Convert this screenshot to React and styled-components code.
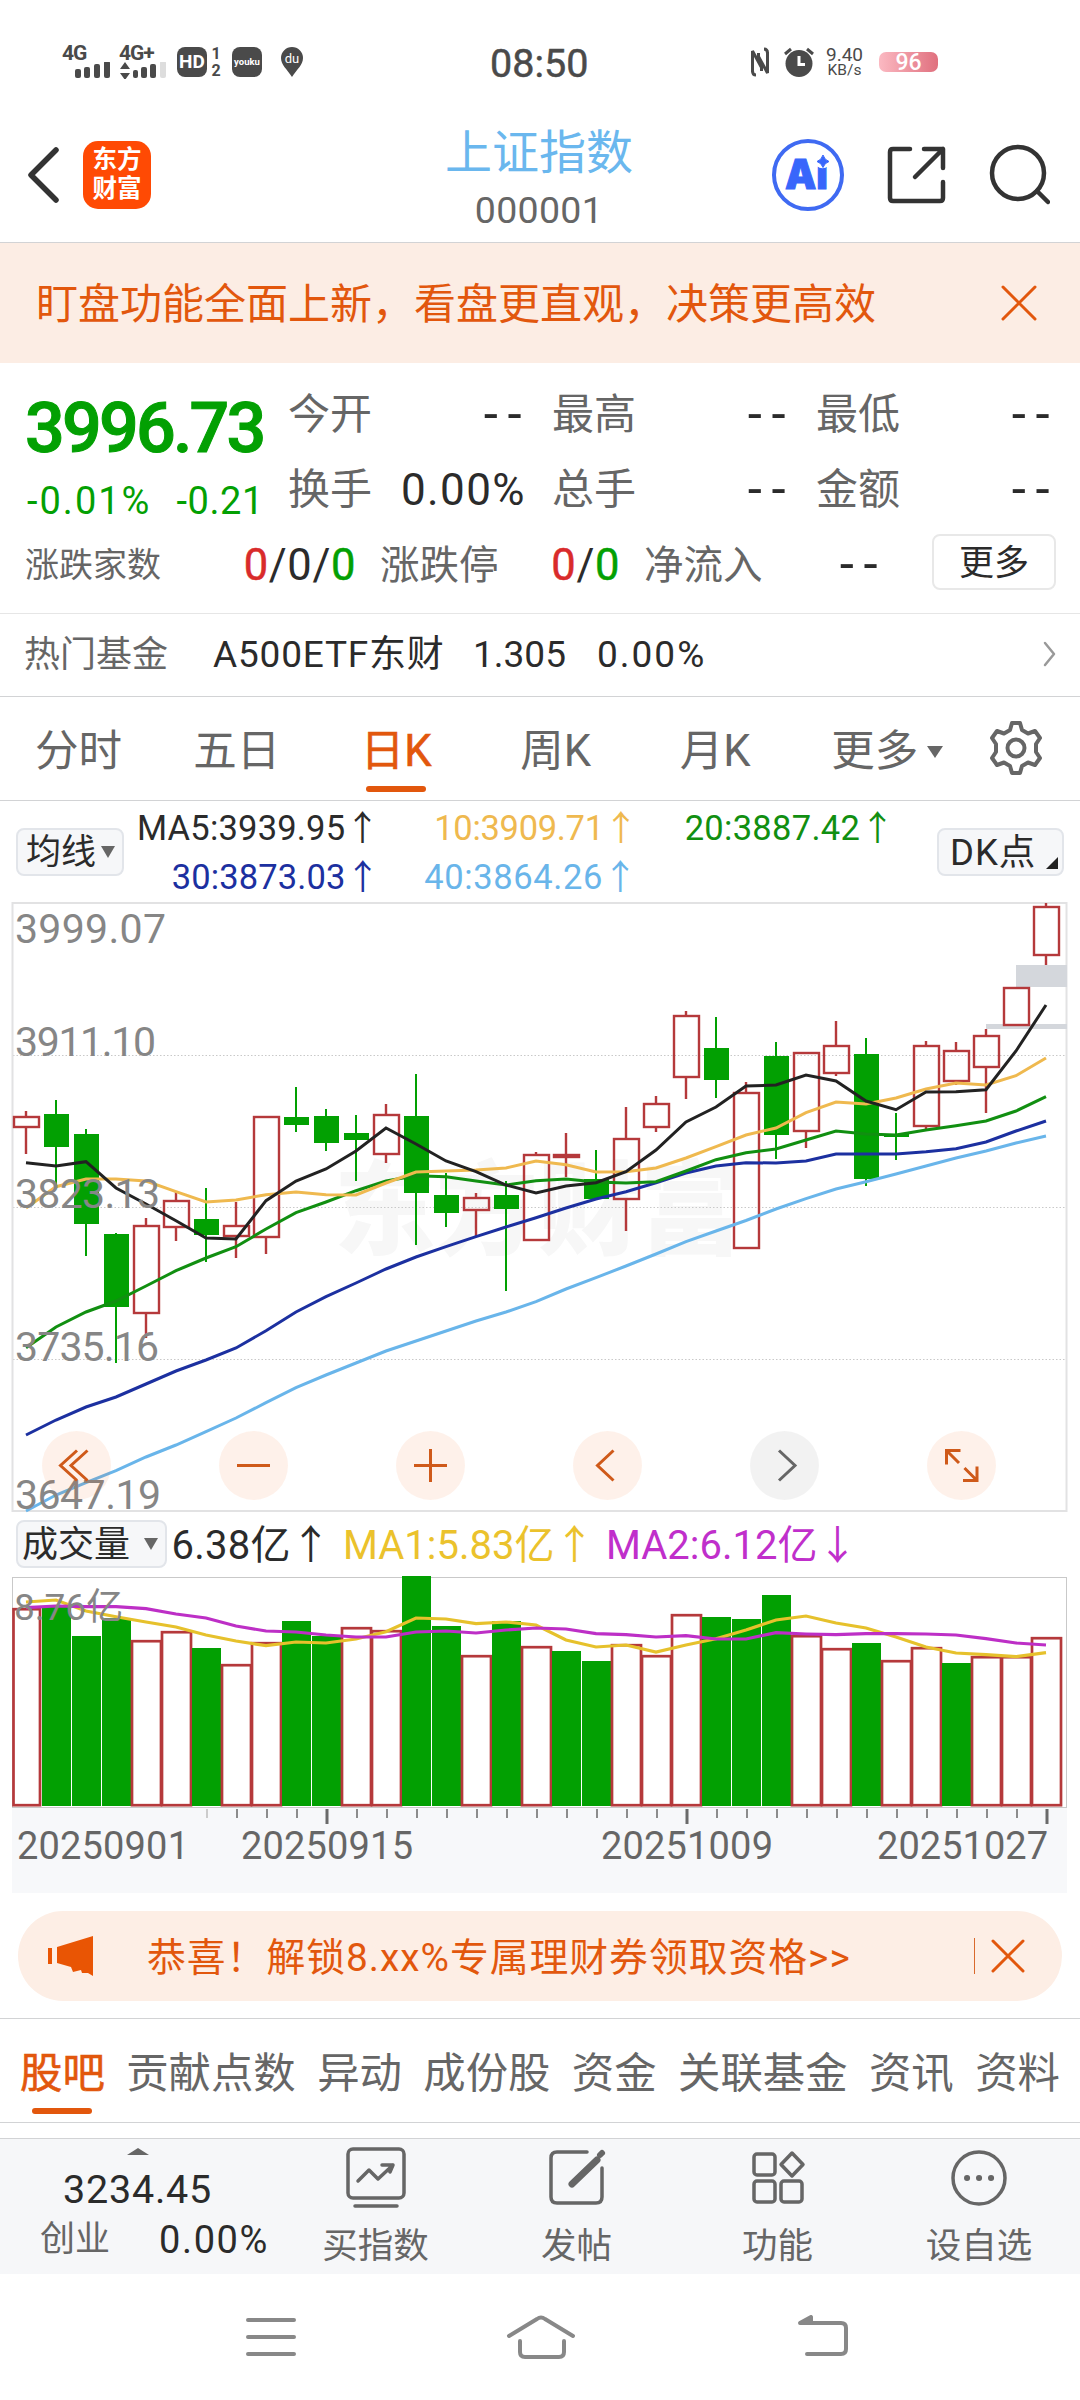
import React from "react";
import styled, { createGlobalStyle, css } from "styled-components";

const c = {
  orange: "#e2570d",
  text: "#2b2b2b",
  grey: "#666666",
  green: "#03a003",
  red: "#d92b2b",
  line: "#d2d3d5",
  panel: "#f6f7f9",
};

const Global = createGlobalStyle`
  * { box-sizing: border-box; }
  body { margin: 0; background: #fff; }
`;

const Screen = styled.div`
  width: 1080px;
  height: 2400px;
  overflow: hidden;
  background: #fff;
  display: flex;
  flex-direction: column;
  font-family: Roboto, "Noto Sans CJK SC", sans-serif;
  color: ${c.text};
  white-space: nowrap;
  & > * { flex: none; }
`;

const T = styled.span`
  font-size: ${(p) => p.$s}px;
  line-height: ${(p) => p.$lh || 1.2};
  color: ${(p) => p.$c || "inherit"};
  font-weight: ${(p) => p.$w || 400};
  letter-spacing: ${(p) => p.$ls || 0}px;
  ${(p) => p.$bold && css`-webkit-text-stroke: ${p.$bold}px currentColor;`}
  ${(p) => !p.$lh && css`padding-top: 0.1em;`}
`;

/* ---------- status bar ---------- */
const StatusBar = styled.div`
  height: 122px;
  padding: 1px 142px 0 62px;
  display: grid;
  grid-template-columns: 428px 1fr auto;
  align-items: center;
  color: #4a4a4a;
`;
const StatusGroup = styled.div`
  display: flex;
  align-items: center;
  height: 34px;
`;
const Signal = styled.div`
  width: ${(p) => p.$w}px;
  height: 34px;
  display: flex;
  flex-direction: column;
  font-size: 21px;
  line-height: 17px;
  font-weight: 700;
  letter-spacing: -1px;
`;
const Badge = styled.div`
  width: 30px;
  height: 30px;
  border-radius: 8px;
  background: #4a4a4a;
  color: #fff;
  font-size: ${(p) => p.$s}px;
  font-weight: 700;
  display: flex;
  align-items: center;
  justify-content: center;
`;
const HdDigits = styled.div`
  width: 14px;
  margin: 0 9px 0 2px;
  display: flex;
  flex-direction: column;
  font-size: 16px;
  line-height: 17px;
  font-weight: 700;
  text-align: center;
`;
const Speed = styled.div`
  margin: 0 15px 0 8px;
  width: 39px;
  display: flex;
  flex-direction: column;
  align-items: center;
  font-size: 19px;
  line-height: 17px;
  small { font-size: 15.5px; line-height: 15px; }
`;
const Battery = styled.div`
  width: 59px;
  height: 20px;
  border-radius: 7px;
  background: linear-gradient(90deg, #fbb9c2, #e0707e);
  color: #fff;
  font-size: 23px;
  line-height: 21px;
  font-weight: 500;
  text-align: center;
`;

/* ---------- header ---------- */
const Header = styled.header`
  height: 121px;
  padding: 0 30px 14px 26px;
  border-bottom: 1px solid ${c.line};
  display: grid;
  grid-template-columns: 317px 1fr 279px;
  grid-template-rows: 106px;
  align-items: center;
`;
const HeaderLeft = styled.div`
  display: flex;
  align-items: center;
  gap: 23px;
`;
const Logo = styled.div`
  width: 68px;
  height: 68px;
  border-radius: 15px;
  background: #ff4a04;
  color: #fff;
  font-size: 24.5px;
  font-weight: 700;
  line-height: 29px;
  padding-top: 4px;
  text-align: center;
`;
const Title = styled.div`
  height: 120px;
  align-self: start;
  margin-right: 36px;
  display: flex;
  flex-direction: column;
  align-items: center;
`;
const HeaderRight = styled.div`
  display: flex;
  align-items: center;
  justify-content: space-between;
`;

/* ---------- banner ---------- */
const Banner = styled.div`
  height: 120px;
  padding: 0 43px 0 36px;
  background: #fcede4;
  display: flex;
  align-items: center;
  justify-content: space-between;
`;

/* ---------- quote ---------- */
const Quote = styled.section`
  height: 251px;
  padding: 13px 23px 0 25px;
  border-bottom: 1px solid #e6e6e6;
`;
const QuoteTop = styled.div`
  display: grid;
  grid-template-columns: 263px 1fr;
  height: 150px;
`;
const PriceCol = styled.div`
  display: flex;
  flex-direction: column;
  color: ${c.green};
`;
const Changes = styled.div`
  display: flex;
  gap: 25px;
  margin: -2px 0 0 2px;
`;
const Cells = styled.div`
  display: grid;
  grid-template-columns: 238px 238px 238px;
  grid-template-rows: 75px 75px;
  column-gap: 26px;
`;
const Cell = styled.div`
  display: flex;
  align-items: center;
  justify-content: space-between;
`;
const Dashes = styled.span`
  font-family: "Noto Sans", sans-serif;
  font-size: 50px;
  line-height: 50px;
  letter-spacing: 7.5px;
  margin: -8px -4px 0 0;
`;
const Breadth = styled.div`
  height: 76px;
  display: flex;
  align-items: center;
`;
const Pair = styled.div`
  width: ${(p) => p.$w}px;
  margin-right: ${(p) => p.$mr || 0}px;
  display: flex;
  align-items: center;
  justify-content: space-between;
`;
const MoreButton = styled.div`
  width: 124px;
  height: 56px;
  margin-top: -4px;
  border: 2px solid #e8e8e8;
  border-radius: 8px;
  display: flex;
  align-items: center;
  justify-content: center;
`;
const Fund = styled.div`
  height: 83px;
  padding: 0 24px 3px 24px;
  border-bottom: 1px solid ${c.line};
  display: flex;
  align-items: center;
`;
const Push = styled.div`
  margin-left: auto;
  display: flex;
`;

/* ---------- period tabs ---------- */
const Periods = styled.nav`
  height: 104px;
  border-bottom: 1px solid ${c.line};
  display: grid;
  grid-template-columns: 157px repeat(5, 159.5px) 1fr;
`;
const Tab = styled.div`
  display: flex;
  flex-direction: column;
  align-items: center;
  padding-top: ${(p) => p.$pt}px;
  font-size: ${(p) => p.$s}px;
  line-height: 54px;
  color: ${(p) => (p.$on ? c.orange : c.grey)};
  -webkit-text-stroke: ${(p) => (p.$on ? 0.6 : 0)}px currentColor;
  &::after {
    content: "";
    width: 60px;
    height: 6px;
    margin: ${(p) => p.$gap}px -20px 0;
    border-radius: 3px;
    background: ${(p) => (p.$on ? c.orange : "transparent")};
  }
`;
const TabRow = styled.span`
  display: flex;
  align-items: center;
  gap: 9px;
  margin-right: -25px;
`;
const Down = styled.i`
  width: 0;
  height: 0;
  border-left: ${(p) => p.$w}px solid transparent;
  border-right: ${(p) => p.$w}px solid transparent;
  border-top: ${(p) => p.$h}px solid ${c.grey};
`;
const Gear = styled.div`
  padding: 23px 2px 0 0;
  text-align: center;
`;

/* ---------- indicator legend ---------- */
const Legend = styled.div`
  height: 100px;
  padding: 1px 16px 0;
  display: flex;
  align-items: center;
`;
const Chip = styled.div`
  width: ${(p) => p.$w}px;
  height: 48px;
  padding: ${(p) => p.$p || "0"};
  border: 2px solid #e2e5ea;
  border-radius: 8px;
  background: ${c.panel};
  display: flex;
  align-items: center;
  justify-content: space-between;
`;
const MaGrid = styled.div`
  width: 771px;
  display: grid;
  grid-template-columns: 256px 258px 257px;
  grid-template-rows: 49px 49px;
  justify-items: end;
  align-items: center;
  margin-right: 42px;
`;
const Corner = styled.i`
  width: 0;
  height: 0;
  align-self: flex-end;
  margin-bottom: 5px;
  border-left: 12px solid transparent;
  border-bottom: 12px solid #222;
`;

/* ---------- charts ---------- */
const ChartArea = styled.div`
  position: relative;
  height: 612px;
`;
const Svg = styled.svg`
  display: block;
  overflow: visible;
  font-family: Roboto, "Noto Sans CJK SC", sans-serif;
`;
const Controls = styled.div`
  position: absolute;
  left: 42px;
  top: 530px;
  display: flex;
  gap: 108px;
`;
const Round = styled.div`
  width: 69px;
  height: 69px;
  border-radius: 50%;
  background: ${(p) => (p.$off ? "rgba(0,0,0,.05)" : "rgba(245,100,20,.09)")};
`;
const VolLegend = styled.div`
  height: 60px;
  padding: 1px 16px 0;
  display: flex;
  align-items: center;
`;
const VolArea = styled.div`
  height: 320px;
`;

/* ---------- promo ---------- */
const Promo = styled.div`
  height: 90px;
  margin: 18px 18px 17px;
  padding: 0 37px 0 29px;
  border-radius: 45px;
  background: #fdeee5;
  display: flex;
  align-items: center;
`;
const PromoText = styled(T)`
  margin-left: 52px;
`;
const Bar = styled.i`
  width: 1px;
  height: 36px;
  background: #d9692c;
  margin: 0 16px 0 auto;
`;

const Topics = styled.nav`
  height: 105px;
  padding: 0 20px;
  border-top: 1px solid ${c.line};
  border-bottom: 1px solid ${c.line};
  display: flex;
  justify-content: space-between;
`;

const BottomBar = styled.div`
  height: 136px;
  margin-top: 15px;
  border-top: 1px solid ${c.line};
  background: #f6f7f9;
  display: grid;
  grid-template-columns: 275px 201px 201px 201px 202px;
`;
const IndexCol = styled.div`
  display: flex;
  flex-direction: column;
  align-items: center;
  padding-top: 9px;
`;
const IndexRow = styled.div`
  width: 229px;
  margin: -2px 0 0 34px;
  display: flex;
  align-items: center;
  justify-content: space-between;
`;
const Up = styled.i`
  width: 0;
  height: 0;
  margin-bottom: 9px;
  border-left: 11px solid transparent;
  border-right: 11px solid transparent;
  border-bottom: 7px solid ${c.grey};
`;
const Action = styled.div`
  display: flex;
  flex-direction: column;
  align-items: center;
  padding-top: 6px;
  gap: 12px;
  color: ${c.grey};
`;
const SysNav = styled.div`
  height: 126px;
  padding-left: 244px;
  display: grid;
  grid-template-columns: 262px 291px 54px;
  align-items: center;
`;

/* ---------- data ---------- */
// [up, bodyTop, bodyBottom, wickTop, wickBottom]
const candles = [
  [1, 1116, 1128, 1111, 1154], [0, 1114, 1147, 1100, 1187], [0, 1134, 1224, 1129, 1256],
  [0, 1234, 1307, 1233, 1363], [1, 1225, 1314, 1218, 1338], [1, 1200, 1228, 1191, 1241],
  [0, 1219, 1235, 1188, 1262], [1, 1225, 1237, 1202, 1258], [1, 1116, 1238, 1116, 1254],
  [0, 1117, 1125, 1087, 1132], [0, 1116, 1143, 1109, 1151], [0, 1133, 1140, 1115, 1181],
  [1, 1114, 1155, 1104, 1163], [0, 1116, 1193, 1074, 1245], [0, 1195, 1213, 1173, 1227],
  [1, 1197, 1211, 1193, 1236], [0, 1195, 1209, 1181, 1291], [1, 1154, 1241, 1152, 1241],
  [1, 1154, 1158, 1133, 1177], [0, 1179, 1199, 1150, 1199], [1, 1138, 1200, 1107, 1231],
  [1, 1103, 1128, 1096, 1132], [1, 1015, 1078, 1011, 1099], [0, 1048, 1080, 1017, 1098],
  [1, 1092, 1249, 1082, 1249], [0, 1056, 1135, 1042, 1159], [1, 1052, 1132, 1052, 1148],
  [1, 1045, 1074, 1021, 1076], [0, 1054, 1179, 1038, 1186], [0, 1134, 1137, 1113, 1160],
  [1, 1045, 1127, 1041, 1129], [1, 1050, 1082, 1042, 1085], [1, 1035, 1068, 1029, 1113],
  [1, 987, 1026, 987, 1026], [1, 906, 956, 903, 965],
];
const averages = [
  ["#69b5ea", [1511, 1495, 1482.7, 1470.7, 1457, 1445, 1431.7, 1418, 1402.7, 1387.7, 1375, 1363, 1351, 1341, 1331, 1321, 1312, 1301.7, 1289, 1277.7, 1266, 1254, 1241.7, 1231, 1220.5, 1209, 1198.7, 1189, 1181.7, 1174, 1166, 1158, 1151, 1143, 1136]],
  ["#1c30a0", [1435, 1420, 1407, 1397, 1384, 1371, 1360, 1348, 1330.7, 1312, 1296.7, 1283, 1269, 1257, 1246.7, 1236.7, 1227, 1217.7, 1208, 1199, 1191.7, 1182.7, 1173, 1166, 1162.7, 1163, 1161, 1154, 1154, 1154, 1151.7, 1148.7, 1142, 1131, 1121]],
  ["#118f11", [1347.7, 1327, 1312, 1301, 1286, 1270.7, 1258, 1246.7, 1229, 1212.7, 1202, 1190.7, 1181, 1175.7, 1176.7, 1181, 1185, 1180.7, 1179, 1182, 1183, 1181.7, 1171, 1159.7, 1152.7, 1149, 1140, 1131, 1134, 1135, 1130, 1125.7, 1121, 1111, 1096.7]],
  ["#efb94f", [1208, 1186.7, 1179, 1179, 1181, 1191.7, 1202, 1200, 1194.7, 1192, 1194.7, 1195, 1183, 1172, 1171, 1170, 1168, 1161, 1164.7, 1172, 1171.7, 1168, 1158, 1146.7, 1135, 1128, 1112.7, 1102, 1104, 1098, 1089, 1083, 1085, 1075.7, 1058]],
  ["#222222", [1162.7, 1166, 1161.7, 1188, 1204, 1220.7, 1238, 1239, 1200.7, 1181, 1169, 1151, 1128, 1144, 1161, 1171.7, 1185, 1193, 1186, 1182.7, 1171.7, 1150, 1122, 1107, 1086, 1085, 1075, 1081, 1101, 1109.7, 1092, 1091.7, 1089.7, 1051, 1005]],
];
const priceLabels = [["3999.07", 943, 151], ["3911.10", 1056, 141], ["3823.13", 1208, 145], ["3735.16", 1361, 144], ["3647.19", 1509, 146]];
const volumes = [1608, 1607, 1636, 1618, 1640, 1631, 1648, 1664, 1642, 1621, 1636, 1627, 1630, 1576, 1626, 1655, 1621, 1646, 1651, 1661, 1644, 1655, 1614, 1617, 1619, 1595, 1635, 1648, 1643, 1660, 1647, 1663, 1656, 1656, 1637];
const volumeDown = new Set([1, 2, 3, 6, 9, 10, 13, 14, 16, 18, 19, 23, 24, 25, 28, 31]);
const volAverages = [
  ["#e6c12c", [1602, 1600, 1611, 1616.7, 1622, 1627, 1635, 1641, 1645.7, 1642, 1643, 1639, 1631.7, 1618, 1619, 1623.7, 1622, 1625, 1640, 1647, 1645, 1652, 1645, 1638.7, 1630, 1620, 1616, 1623, 1628, 1637, 1647, 1653, 1654.7, 1656.7, 1652.7]],
  ["#bd2fc6", [1607.7, 1606, 1606.7, 1606.7, 1608.7, 1614, 1618, 1626, 1631, 1632, 1635, 1637, 1637, 1632, 1631, 1633, 1630, 1628, 1629, 1633.7, 1634.7, 1637, 1635.7, 1639, 1639, 1632.7, 1634, 1634.7, 1633.7, 1633.7, 1634, 1635, 1638.7, 1643, 1645]],
];
const RED = "#b5393b";
const GREEN = "#02a002";
const cx = (i) => 26 + 30 * i;
const pts = (a) => a.map((y, i) => `${cx(i)},${y}`).join(" ");

function PriceChart() {
  return (
    <Svg width="1080" height="612" viewBox="0 901 1080 612">
      <text x="334" y="1247" fontSize="102" fontWeight="900" fill="#f7f7f7">东方财富</text>
      {[1055.5, 1207.5, 1359.5].map((y) => (
        <line key={y} x1="13" x2="1067" y1={y} y2={y} stroke="#c9c9c9" strokeDasharray="1.5 2" />
      ))}
      <rect x="12.5" y="903" width="1054" height="608" fill="none" stroke="#e2e2e3" strokeWidth="2" />
      <rect x="1016" y="965" width="51" height="22" fill="#d4d7dc" />
      <rect x="986" y="1024" width="81" height="5" fill="#d4d7dc" />
      {candles.map(([up, t, b, wt, wb], i) =>
        up ? (
          <g key={i} stroke={RED} strokeWidth="2.4" fill="none">
            <path d={`M${cx(i)} ${wt}V${t}M${cx(i)} ${b}V${wb}`} />
            <rect x={cx(i) - 12} y={t + 1} width="25" height={Math.max(b - t - 2, 1)} />
          </g>
        ) : (
          <g key={i} fill={GREEN}>
            <rect x={cx(i) - 1} y={wt} width="2" height={wb - wt} />
            <rect x={cx(i) - 12} y={t} width="25" height={b - t} />
          </g>
        )
      )}
      {averages.map(([col, a]) => (
        <polyline key={col} points={pts(a)} fill="none" stroke={col} strokeWidth="3" />
      ))}
      {priceLabels.map(([s, y, w]) => (
        <text key={s} x="15" y={y} fontSize="41" fill="#868686" textLength={w}>{s}</text>
      ))}
    </Svg>
  );
}

function VolumeChart() {
  return (
    <Svg width="1080" height="320" viewBox="0 1573 1080 320">
      <rect x="12" y="1808" width="1055" height="85" fill="#f7f8fa" />
      <rect x="12.5" y="1577.5" width="1054" height="230" fill="none" stroke="#c9c9c9" />
      {volumes.map((y, i) =>
        volumeDown.has(i) ? (
          <rect key={i} x={cx(i) - 14} y={y} width="29" height={1806 - y} fill={GREEN} />
        ) : (
          <rect key={i} x={i ? cx(i) - 14 : 13.5} y={y + 1.2} width={i ? 29 : 26.5} height={1806 - y - 2} fill="#fff" stroke={RED} strokeWidth="2.7" />
        )
      )}
      {volAverages.map(([col, a]) => (
        <polyline key={col} points={pts(a)} fill="none" stroke={col} strokeWidth="3.2" />
      ))}
      <text x="14" y="1620" fontSize="37" fill="#868686">8.76亿</text>
      {Array.from({ length: 29 }, (_, k) => k + 6).map((i) => {
        const major = (i - 10) % 12 === 0;
        return <rect key={i} x={cx(i) + (major ? -0.5 : 0)} y="1809" width={major ? 3 : 2} height={major ? 15 : 9} fill={i === 6 ? "#ccc" : major ? "#6a6a6a" : "#8c8c8c"} />;
      })}
      {[["20250901", 17, 172], ["20250915", 241, 172], ["20251009", 601, 172], ["20251027", 877, 171]].map(([s, x, w]) => (
        <text key={s} x={x} y="1859" fontSize="38" fill="#666" textLength={w}>{s}</text>
      ))}
    </Svg>
  );
}

const Icon = ({ w, h, sw = 4, color = "#333", children }) => (
  <svg width={w} height={h} viewBox={`0 0 ${w} ${h}`} fill="none" stroke={color} strokeWidth={sw} strokeLinecap="round" strokeLinejoin="round">
    {children}
  </svg>
);

const controls = [
  <path key="a" d="M35 19.5 18.5 34.5 35 49.5M45.5 19.5 29 34.5 45.5 49.5" />,
  <path key="b" d="M18 34.5H51" />,
  <path key="c" d="M18 34.5H51M34.5 18V51" />,
  <path key="d" d="M40.5 19.5 24.5 34.5 40.5 49.5" />,
  <path key="e" d="M29 19.5 45 34.5 29 49.5" />,
  <path key="f" d="M19.5 33.5V19.5H33.5M19.5 19.5 32 32M50 35.5V49.5H36M50 49.5 37.5 37" />,
];

const Digit = styled.span`
  color: ${(p) => p.$c};
  -webkit-text-stroke: 0.5px currentColor;
`;

export default function App() {
  return (
    <Screen>
      <Global />
      <StatusBar>
        <StatusGroup>
          <Signal $w={57}>
            4G
            <svg width="48" height="17" fill="#4a4a4a">
              <rect x="13" y="7" width="6" height="9" rx="2" /><rect x="22" y="5" width="6" height="11" rx="2" />
              <rect x="32" y="2" width="6" height="14" rx="2" /><rect x="42" y="-1" width="6" height="17" rx="2" />
            </svg>
          </Signal>
          <Signal $w={58}>
            4G+
            <svg width="48" height="18" fill="#4a4a4a">
              <path d="M6 0 11 7H1ZM6 18 1 11H11Z" />
              <rect x="14" y="8" width="5" height="8" rx="2" /><rect x="22" y="5" width="6" height="11" rx="2" />
              <rect x="31" y="2" width="6" height="14" rx="2" /><rect x="41" y="-1" width="6" height="17" rx="2" fill="#ddd" />
            </svg>
          </Signal>
          <Badge $s={19}>HD</Badge>
          <HdDigits><span>1</span><span>2</span></HdDigits>
          <Badge $s={9.5}>youku</Badge>
          <svg width="60" height="32" viewBox="0 0 60 32">
            <path transform="translate(19 1)" d="M11 0a11 11 0 0 1 11 11c0 7-6 11-11 19C6 22 0 18 0 11A11 11 0 0 1 11 0Z" fill="#4a4a4a" />
            <text x="30" y="17" fontSize="13" textAnchor="middle" fill="#fff" fontFamily="Roboto">du</text>
          </svg>
        </StatusGroup>
        <T $s={39.5} $bold={0.5}>08:50</T>
        <StatusGroup>
          <svg width="18" height="30" viewBox="0 0 18 30" fill="none" stroke="#4a4a4a" strokeWidth="3">
            <path d="M1.5 25V4L10.500 20.500V24M16.500 5V26L7.500 9.500V6M1.500 24Q1.500 28 5 28M16.500 6Q16.500 2 13 2" />
          </svg>
          <svg width="48" height="32" viewBox="-12 0 48 32">
            <circle cx="18" cy="17.500" r="13.500" fill="#4a4a4a" />
            <path d="M18 10V18.500H24" fill="none" stroke="#fff" strokeWidth="3" />
            <path d="M4 8 10 3M32 8 26 3" stroke="#4a4a4a" strokeWidth="3" />
          </svg>
          <Speed><span>9.40</span><small>KB/s</small></Speed>
          <Battery>96</Battery>
        </StatusGroup>
      </StatusBar>

      <Header>
        <HeaderLeft>
          <Icon w={34} h={56} sw={5.5}><path d="M30 3 5 28 30 53" /></Icon>
          <Logo>东方<br />财富</Logo>
        </HeaderLeft>
        <Title>
          <T $s={47} $lh="62px" $c="#6ab7ee">上证指数</T>
          <T $s={37.5} $ls={0.3} $lh="52px" $c="#666">000001</T>
        </Title>
        <HeaderRight>
          <svg width="74" height="74" viewBox="0 0 74 74">
            <circle cx="37" cy="37" r="34" fill="none" stroke="#3f6af2" strokeWidth="4" />
            <text x="14" y="51" fontFamily="Inter, sans-serif" fontSize="41" fontWeight="900" fill="#3866fb" stroke="#3866fb" strokeWidth="1" textLength="43" lengthAdjust="spacingAndGlyphs">Ai</text>
            <circle cx="51.500" cy="22.500" r="7.800" fill="#fff" />
            <path d="M52 17Q53.500 22 58 23.500Q53.500 25 52 29.500Q50.500 25 46 23.500Q50.500 22 52 17Z" fill="#3866fb" stroke="#3866fb" strokeWidth="1" />
          </svg>
          <Icon w={62} h={62} sw={4.5}>
            <path d="M24 5H7Q4 5 4 8V54Q4 57 7 57H54Q57 57 57 54V38M38 5H57V24M57 5 29 33" />
          </Icon>
          <Icon w={62} h={62} sw={4.5}><circle cx="30" cy="29" r="26" /><path d="M49 47 60 58" /></Icon>
        </HeaderRight>
      </Header>

      <Banner>
        <T $s={42} $c={c.orange}>盯盘功能全面上新，看盘更直观，决策更高效</T>
        <Icon w={36} h={36} sw={3} color={c.orange}><path d="M2 2 34 34M34 2 2 34" /></Icon>
      </Banner>

      <Quote>
        <QuoteTop>
          <PriceCol>
            <T $s={70} $w={500} $bold={1} $ls={-2.8} $lh="104px">3996.73</T>
            <Changes>
              <T $s={38} $ls={2} $lh="46px">-0.01%</T>
              <T $s={38} $ls={0.6} $lh="46px">-0.21</T>
            </Changes>
          </PriceCol>
          <Cells>
            <Cell><T $s={42} $c={c.grey}>今开</T><Dashes>--</Dashes></Cell>
            <Cell><T $s={42} $c={c.grey}>最高</T><Dashes>--</Dashes></Cell>
            <Cell><T $s={42} $c={c.grey}>最低</T><Dashes>--</Dashes></Cell>
            <Cell><T $s={42} $c={c.grey}>换手</T><T $s={44} $ls={1.4}>0.00%</T></Cell>
            <Cell><T $s={42} $c={c.grey}>总手</T><Dashes>--</Dashes></Cell>
            <Cell><T $s={42} $c={c.grey}>金额</T><Dashes>--</Dashes></Cell>
          </Cells>
        </QuoteTop>
        <Breadth>
          <Pair $w={331} $mr={24}>
            <T $s={34} $c={c.grey}>涨跌家数</T>
            <T $s={43.5} $ls={0.6}><Digit $c={c.red}>0</Digit>/0/<Digit $c={c.green}>0</Digit></T>
          </Pair>
          <Pair $w={240} $mr={24}>
            <T $s={39.5} $c={c.grey}>涨跌停</T>
            <T $s={43.5} $ls={0.6}><Digit $c={c.red}>0</Digit>/<Digit $c={c.green}>0</Digit></T>
          </Pair>
          <Pair $w={238} $mr={50}><T $s={39.5} $c={c.grey}>净流入</T><Dashes>--</Dashes></Pair>
          <MoreButton><T $s={35}>更多</T></MoreButton>
        </Breadth>
      </Quote>

      <Fund>
        <Pair $w={143} $mr={46}><T $s={36} $c={c.grey}>热门基金</T></Pair>
        <Pair $w={230} $mr={30}><T $s={37} $ls={0.8}>A500ETF东财</T></Pair>
        <Pair $w={94} $mr={30}><T $s={37}>1.305</T></Pair>
        <T $s={37} $ls={2}>0.00%</T>
        <Push><Icon w={13} h={26} sw={2.5} color="#999"><path d="M2 2 11 13 2 24" /></Icon></Push>
      </Fund>

      <Periods>
        <Tab $s={43.5} $pt={28} $gap={7}>分时</Tab>
        <Tab $s={43.5} $pt={28} $gap={7}>五日</Tab>
        <Tab $s={43.5} $pt={28} $gap={7} $on>日K</Tab>
        <Tab $s={43.5} $pt={28} $gap={7}>周K</Tab>
        <Tab $s={43.5} $pt={28} $gap={7}>月K</Tab>
        <Tab $s={43.5} $pt={28} $gap={7}><TabRow>更多<Down $w={8} $h={12} /></TabRow></Tab>
        <Gear>
          <Icon w={52} h={56} sw={4} color={c.grey}>
            <path d="M22 3H30L32 10 38 13.5 45 11 50 18 46 24V32L50 38 45 45 38 42.5 32 46 30 53H22L20 46 14 42.5 7 45 2 38 6 32V24L2 18 7 11 14 13.5 20 10Z" />
            <circle cx="26" cy="28" r="8.5" />
          </Icon>
        </Gear>
      </Periods>

      <Legend>
        <Chip $w={108} $p="0 7px 0 8px"><T $s={35}>均线</T><Down $w={7.5} $h={12} /></Chip>
        <MaGrid>
          <T $s={34.5} $ls={0.2}>MA5:3939.95↑</T>
          <T $s={34.5} $ls={-0.3} $c="#efb94f">10:3909.71↑</T>
          <T $s={34.5} $ls={0.3} $c="#118f11">20:3887.42↑</T>
          <T $s={34.5} $ls={0.1} $c="#1c30a0">30:3873.03↑</T>
          <T $s={34.5} $ls={0.6} $c="#69b5ea">40:3864.26↑</T>
        </MaGrid>
        <Chip $w={127} $p="0 4px 0 11px"><T $s={36.5} $ls={1}>DK点</T><Corner /></Chip>
      </Legend>

      <ChartArea>
        <PriceChart />
        <Controls>
          {controls.map((d, i) => (
            <Round key={i} $off={i === 4}>
              <svg width="69" height="69" fill="none" stroke={i === 4 ? c.grey : "#cf5a1a"} strokeWidth="3">{d}</svg>
            </Round>
          ))}
        </Controls>
      </ChartArea>

      <VolLegend>
        <Chip $w={151} $p="0 7px 0 4px"><T $s={36}>成交量</T><Down $w={7.5} $h={12} /></Chip>
        <Pair $w={176}><T $s={40} $ls={0.3}>&#8202;6.38亿↑</T></Pair>
        <Pair $w={263}><T $s={40} $c="#ebc22c">MA1:5.83亿↑</T></Pair>
        <T $s={40} $c="#c02fcb">MA2:6.12亿↓</T>
      </VolLegend>
      <VolArea><VolumeChart /></VolArea>

      <Promo>
        <svg width="48" height="42" viewBox="0 0 48 42" fill="#e95504">
          <rect x="1" y="13" width="4" height="16" />
          <path d="M10 12 46 1V41L41 38H35L34 35L26 37L24 32L10 28Z" />
        </svg>
        <PromoText $s={38.8} $ls={1} $c={c.orange}>恭喜！解锁8.xx%专属理财券领取资格&gt;&gt;</PromoText>
        <Bar />
        <Icon w={34} h={34} sw={3} color={c.orange}><path d="M2 2 32 32M32 2 2 32" /></Icon>
      </Promo>

      <Topics>
        {["股吧", "贡献点数", "异动", "成份股", "资金", "关联基金", "资讯", "资料"].map((t, i) => (
          <Tab key={t} $s={42.4} $pt={28} $gap={7} $on={i === 0}>{t}</Tab>
        ))}
      </Topics>

      <BottomBar>
        <IndexCol>
          <Up />
          <T $s={39.5} $ls={0.8} $lh="52px">3234.45</T>
          <IndexRow><T $s={35} $c={c.grey}>创业</T><T $s={38} $ls={1.6}>0.00%</T></IndexRow>
        </IndexCol>
        <Action>
          <Icon w={64} h={64} sw={3.5} color={c.grey}>
            <rect x="4" y="4" width="56" height="49" rx="5" /><path d="M11 61H53M14 36 25 25 34 34 49 20M38 20H49L46 27" />
          </Icon>
          <T $s={35.5}>买指数</T>
        </Action>
        <Action>
          <Icon w={64} h={64} sw={3.5} color={c.grey}>
            <path d="M42 7H12Q6 7 6 13V52Q6 58 12 58H51Q57 58 57 52V23" /><path d="M52 15 27 39" strokeWidth="7" /><path d="M55 10 57 8" strokeWidth="6" />
          </Icon>
          <T $s={35.5}>发帖</T>
        </Action>
        <Action>
          <Icon w={64} h={64} sw={3.5} color={c.grey}>
            <rect x="8" y="9" width="21" height="21" rx="3" /><rect x="8" y="36" width="21" height="21" rx="3" /><rect x="35" y="36" width="21" height="21" rx="3" />
            <path d="M46 8 57 19.5 46 31 35 19.5Z" />
          </Icon>
          <T $s={35.5}>功能</T>
        </Action>
        <Action>
          <Icon w={64} h={64} sw={3.5} color={c.grey}>
            <circle cx="32" cy="33" r="26" /><path d="M20 33H20.1M32 33H32.1M44 33H44.1" strokeWidth="6" />
          </Icon>
          <T $s={35.5}>设自选</T>
        </Action>
      </BottomBar>

      <SysNav>
        <Icon w={54} h={44} sw={4} color="#888"><path d="M4 5H50M4 22H50M4 39H50" /></Icon>
        <Icon w={70} h={46} sw={4} color="#888"><path d="M3 22 31 5Q35 2 39 5L67 22M14 27V38Q14 43 19 43H53Q58 43 58 38V27" /></Icon>
        <Icon w={54} h={44} sw={4} color="#888"><path d="M4 8H44Q49 8 49 13V34Q49 39 44 39H10" /><path d="M3 8 14 2V8Z" fill="#888" /></Icon>
      </SysNav>
    </Screen>
  );
}
